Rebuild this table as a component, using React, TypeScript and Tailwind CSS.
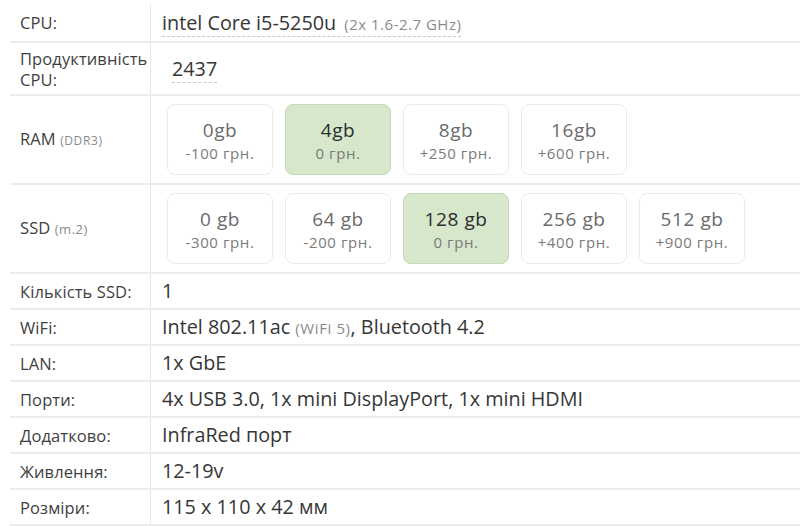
import type { ReactNode } from "react";

type Option = { size: string; price: string; selected?: boolean };

const ram: Option[] = [
  { size: "0gb", price: "-100 грн." },
  { size: "4gb", price: "0 грн.", selected: true },
  { size: "8gb", price: "+250 грн." },
  { size: "16gb", price: "+600 грн." },
];

const ssd: Option[] = [
  { size: "0 gb", price: "-300 грн." },
  { size: "64 gb", price: "-200 грн." },
  { size: "128 gb", price: "0 грн.", selected: true },
  { size: "256 gb", price: "+400 грн." },
  { size: "512 gb", price: "+900 грн." },
];

const Row = ({
  label,
  children,
  className,
}: {
  label: ReactNode;
  children: ReactNode;
  className: string;
}) => (
  <div className={`flex border-b-2 border-[#ececec] ${className}`}>
    <div className="flex w-[140px] shrink-0 items-center pl-[10px] text-[16.5px] leading-[21px] tracking-[0.1px] text-[#3f3f3f]">
      {label}
    </div>
    <div className="flex flex-1 items-center border-l border-[#e6e6e6] text-[19.8px] text-[#363636]">
      {children}
    </div>
  </div>
);

const Options = ({ items }: { items: Option[] }) => (
  <div className="flex gap-3 pl-4">
    {items.map((o) => (
      <div
        key={o.size}
        className={`flex h-[71px] w-[106px] flex-col items-center justify-center rounded-lg border ${
          o.selected
            ? "border-[#c4d9b6] bg-[#d6e7cb]"
            : "border-[#ebebeb] bg-white"
        }`}
      >
        <span
          className={`text-[19px] leading-[24px] tracking-[0.6px] ${
            o.selected ? "text-[#2c2c2c]" : "text-[#6a6a6a]"
          }`}
        >
          {o.size}
        </span>
        <span className="mt-[2px] text-[15px] leading-[18px] tracking-[0.6px] text-[#7a7a7a]">
          {o.price}
        </span>
      </div>
    ))}
  </div>
);

const App = () => {
  return (
    <div
      className="h-[526px] w-[800px] overflow-hidden bg-white pl-[10px]"
      style={{ fontFamily: "'Open Sans', Lato, sans-serif" }}
    >
      <Row label="CPU:" className="h-[43px] pt-[4px]">
        <span className="pl-[11px]">
          <span className="border-b border-dashed border-[#c8c8c8]">
            intel Core i5-5250u{" "}
            <span className="ml-[3px] text-[15px] tracking-[0.5px] text-[#8a8a8a]">
              (2x 1.6-2.7 GHz)
            </span>
          </span>
        </span>
      </Row>
      <Row
        label={
          <span>
            Продуктивність
            <br />
            CPU:
          </span>
        }
        className="h-[53px]"
      >
        <span className="pl-[21px]">
          <span className="border-b border-dashed border-[#c8c8c8]">2437</span>
        </span>
      </Row>
      <Row
        label={
          <span>
            RAM{" "}
            <span className="text-[12px] tracking-[0.6px] text-[#8a8a8a]">
              (DDR3)
            </span>
          </span>
        }
        className="h-[89px]"
      >
        <Options items={ram} />
      </Row>
      <Row
        label={
          <span>
            SSD{" "}
            <span className="text-[13px] tracking-[0.5px] text-[#8a8a8a]">
              (m.2)
            </span>
          </span>
        }
        className="h-[89px]"
      >
        <Options items={ssd} />
      </Row>
      <Row label="Кількість SSD:" className="h-[36px]">
        <span className="pl-[11px]">1</span>
      </Row>
      <Row label="WiFi:" className="h-[36px]">
        <span className="pl-[11px]">
          Intel 802.11ac{" "}
          <span className="text-[15px] tracking-[0.6px] text-[#8a8a8a]">
            (WiFi 5)
          </span>
          , Bluetooth 4.2
        </span>
      </Row>
      <Row label="LAN:" className="h-[36px]">
        <span className="pl-[11px]">1x GbE</span>
      </Row>
      <Row label="Порти:" className="h-[36px]">
        <span className="pl-[11px]">
          4x USB 3.0, 1x mini DisplayPort, 1x mini HDMI
        </span>
      </Row>
      <Row label="Додатково:" className="h-[36px]">
        <span className="pl-[11px]">InfraRed порт</span>
      </Row>
      <Row label="Живлення:" className="h-[36px]">
        <span className="pl-[11px]">12-19v</span>
      </Row>
      <Row label="Розміри:" className="h-[36px]">
        <span className="pl-[11px]">115 x 110 x 42 мм</span>
      </Row>
    </div>
  );
};

export default App;
